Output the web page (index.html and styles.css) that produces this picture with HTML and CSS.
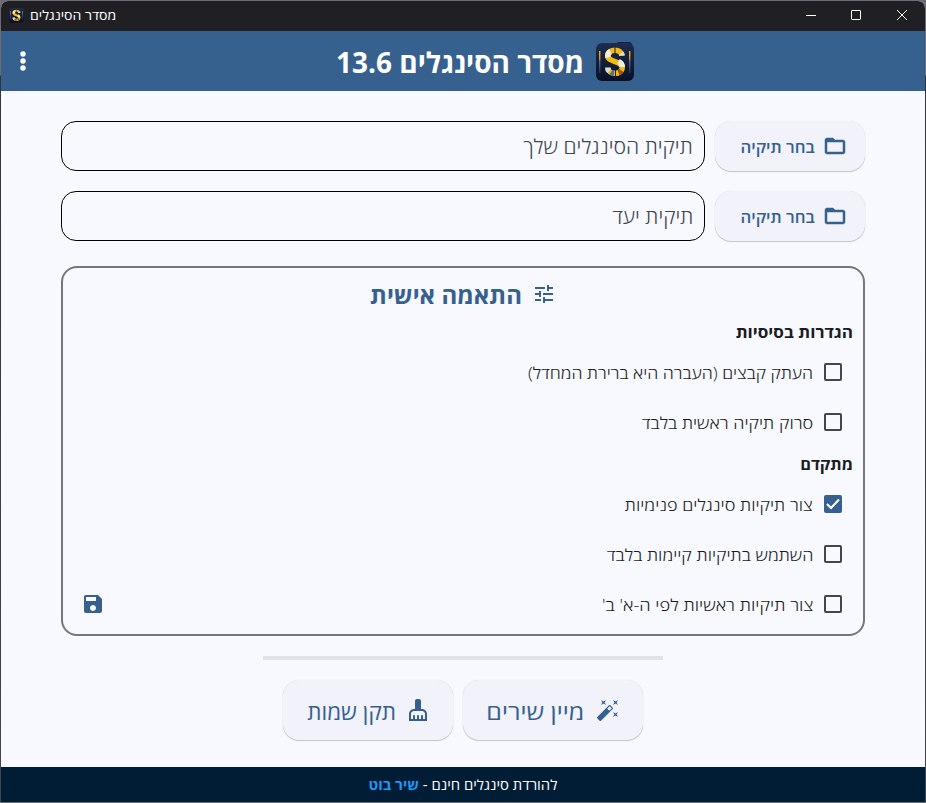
FILE: index.html
```html
<!DOCTYPE html>
<html lang="he" dir="rtl">
<head>
<meta charset="utf-8">
<title>מסדר הסינגלים</title>
<link rel="stylesheet" href="styles.css">
</head>
<body>
<svg width="0" height="0" class="defs" aria-hidden="true">
  <defs>
    <linearGradient id="tile" x1="0" y1="0" x2="0" y2="1"><stop offset="0" stop-color="#1d2d4f"/><stop offset="1" stop-color="#081024"/></linearGradient>
    <linearGradient id="bar" x1="0" y1="0" x2="0" y2="1"><stop offset="0" stop-color="#f5b014"/><stop offset=".35" stop-color="#d99a20"/><stop offset=".45" stop-color="#5a7190"/><stop offset="1" stop-color="#20375c"/></linearGradient>
    <symbol id="logo" viewBox="0 0 38 40">
      <path d="M20 3 22 1h12l2 2v4H20z" fill="#14203c"/>
      <rect y="2" width="38" height="38" rx="6" fill="url(#tile)"/>
      <rect x="3" y="10" width="1.400" height="22" fill="url(#bar)"/>
      <rect x="33" y="10" width="1.400" height="22" fill="url(#bar)"/>
      <g fill="none" stroke-width="5.500">
        <path d="M26 14.500C25.500 11 22.500 9.200 19 9.200c-4 0-7.200 2.300-7.200 5.600 0 7 14.400 4.500 14.400 11.700 0 3.500-3.200 5.800-7.200 5.800-4 0-7-2-7.200-5.500" stroke="#f6b817"/>
        <path d="M11.900 16.500c-.5-3 .8-5 2.600-6M22.500 20.500c2.500 1.200 3.800 3 3.700 5.500" stroke="#f4efdf"/>
        <path d="M25.200 12.200c.5.800.8 1.500.8 2.600M11.800 26.500c0 1.500.6 2.800 1.400 3.600" stroke="#d5dde0"/>
        <path d="M14.800 31.300c1 .6 2.200.9 3.200 1" stroke="#58718e"/>
        <path d="M22.500 31.600c1.200-.5 2-1.200 2.700-2.200" stroke="#9a5210"/>
      </g>
      <path d="M19 5.500v7M19.500 29v7" stroke="#14203c"/>
    </symbol>
    <symbol id="folder" viewBox="0 0 24 24"><path stroke-width=".5" stroke="#36618e" d="M20 6h-8l-2-2H4c-1.100 0-1.990.9-1.990 2L2 18c0 1.100.9 2 2 2h16c1.100 0 2-.9 2-2V8c0-1.100-.9-2-2-2zm0 12H4V8h16v10z"/></symbol>
  </defs>
</svg>
<div class="window">
  <div class="titlebar">
    <div class="controls">
      <svg width="12" height="12" viewBox="0 0 12 12"><path d="m1 1 10 10M11 1 1 11"/></svg>
      <svg width="12" height="12" viewBox="0 0 12 12"><rect x="1.500" y="1.500" width="9" height="9" rx=".5"/></svg>
      <svg width="12" height="12" viewBox="0 0 12 12"><path d="M1 6.500h10"/></svg>
    </div>
    <div class="caption"><span class="caption-text">מסדר הסינגלים</span><svg class="caption-logo"><use href="#logo"/></svg></div>
  </div>
  <header class="appbar">
    <h1><svg class="logo"><use href="#logo"/></svg><span class="app-title">מסדר הסינגלים 13.6</span></h1>
    <span class="more"><svg width="24" height="24" viewBox="0 0 24 24"><circle cx="12" cy="5" r="2.700"/><circle cx="12" cy="12" r="2.700"/><circle cx="12" cy="19" r="2.700"/></svg></span>
  </header>
  <main>
    <div class="row">
      <button class="btn pick"><svg><use href="#folder"/></svg><span>בחר תיקיה</span></button>
      <div class="field"><span>תיקית הסינגלים שלך</span></div>
    </div>
    <div class="row">
      <button class="btn pick"><svg><use href="#folder"/></svg><span>בחר תיקיה</span></button>
      <div class="field"><span>תיקית יעד</span></div>
    </div>
    <section class="panel">
      <h2><svg width="24" height="24" viewBox="0 0 24 24"><path d="M3 17v2h6v-2H3zM3 5v2h10V5H3zm10 16v-2h8v-2h-8v-2h-2v6h2zM7 9v2H3v2h4v2h2V9H7zm14 4v-2H11v2h10zm-6-4h2V7h4V5h-4V3h-2v6z"/></svg><span>התאמה אישית</span></h2>
      <h3 class="basic"><span>הגדרות בסיסיות</span></h3>
      <label class="check"><i></i><span class="c1">העתק קבצים (העברה היא ברירת המחדל)</span></label>
      <label class="check"><i></i><span>סרוק תיקיה ראשית בלבד</span></label>
      <h3 class="advanced"><span>מתקדם</span></h3>
      <label class="check"><i class="on"><svg width="18" height="18" viewBox="0 0 18 18"><path d="m3 9 4 4 8-8.500"/></svg></i><span>צור תיקיות סינגלים פנימיות</span></label>
      <label class="check"><i></i><span>השתמש בתיקיות קיימות בלבד</span></label>
      <div class="last">
        <label class="check"><i></i><span class="c5">צור תיקיות ראשיות לפי ה-א' ב'</span></label>
        <svg class="save" width="24" height="24" viewBox="0 0 24 24"><path d="M17 3H5c-1.110 0-2 .9-2 2v14c0 1.100.89 2 2 2h14c1.100 0 2-.9 2-2V7l-4-4zm-5 16c-1.660 0-3-1.340-3-3s1.340-3 3-3 3 1.340 3 3-1.340 3-3 3zm3-10H5V5h10v4z"/></svg>
      </div>
    </section>
    <div class="progress"></div>
    <div class="actions">
      <button class="btn sort"><svg viewBox="0 0 24 24"><path d="M7.500 5.600 10 7 8.600 4.500 10 2 7.500 3.400 5 2l1.400 2.500L5 7zm12 9.800L17 14l1.400 2.500L17 19l2.500-1.400L22 19l-1.400-2.500L22 14zM22 2l-2.500 1.400L17 2l1.400 2.500L17 7l2.500-1.400L22 7l-1.400-2.500zm-7.630 5.290a.996.996 0 0 0-1.410 0L1.290 18.960a.996.996 0 0 0 0 1.410l2.340 2.340c.39.39 1.020.39 1.410 0L16.700 11.050a.996.996 0 0 0 0-1.410l-2.330-2.350zm-1.030 5.490-2.120-2.120 2.440-2.440 2.120 2.120-2.440 2.440z"/></svg><span>מיין שירים</span></button>
      <button class="btn fix"><svg viewBox="0 0 24 24"><path d="M16 11h-1V3c0-1.100-.9-2-2-2h-2c-1.100 0-2 .9-2 2v8H8c-2.760 0-5 2.240-5 5v7h18v-7c0-2.760-2.240-5-5-5zm3 10h-2v-3c0-.55-.45-1-1-1s-1 .45-1 1v3h-2v-3c0-.55-.45-1-1-1s-1 .45-1 1v3H9v-3c0-.55-.45-1-1-1s-1 .45-1 1v3H5v-5c0-1.650 1.350-3 3-3h8c1.650 0 3 1.350 3 3v5z"/></svg><span>תקן שמות</span></button>
    </div>
  </main>
  <footer><span>להורדת סינגלים חינם - <a>שיר בוט</a></span></footer>
</div>
</body>
</html>
```
FILE: styles.css
```css
* { box-sizing: border-box; }
body { margin: 0; background: linear-gradient(#716b78, #716b78 75px, #30343d 76px, #40454e); font-family: "Open Sans", "Liberation Sans", sans-serif; overflow: hidden; }
.defs { position: absolute; }
svg { display: block; flex: none; }
span { display: block; white-space: nowrap; transform-origin: right center; }
.window { height: 801px; margin: 1px 1px 0; border-radius: 7px 7px 0 0; overflow: hidden; display: flex; flex-direction: column; background: #f8f9ff; }
.titlebar { height: 30px; background: #202024; display: flex; align-items: center; justify-content: space-between; padding: 0 17px 2px 8px; direction: ltr; flex-direction: row-reverse; }
.controls { display: flex; flex-direction: row-reverse; gap: 33px; fill: none; stroke: #fff; }
.controls svg { stroke-width: 1; }
.controls svg:first-child { margin-left: 1px; }
.caption { display: flex; flex-direction: row-reverse; align-items: center; gap: 6px; color: #fff; font-size: 13px; }
.caption-text { transform: scaleX(1.08); transform-origin: left center; direction: rtl; }
.caption-logo { width: 15px; height: 16px; }
.appbar { height: 60px; background: #36618e; color: #fff; display: flex; align-items: center; }
.appbar h1 { margin: 0; flex: 1; justify-content: center; display: flex; align-items: center; gap: 12px; font-size: 28px; font-weight: 700; }
.app-title { padding-top: 2px; }
.logo { width: 38px; height: 40px; }
.more { width: 44px; display: flex; justify-content: center; fill: #fff; }
main { flex: 1; padding: 30px 60px 0; display: flex; flex-direction: column; }
.row { display: flex; gap: 10px; margin-bottom: 20px; }
.btn { border: 0; background: #f1f2fa; color: #36618e; fill: #36618e; font: 600 16px "Open Sans", sans-serif; display: flex; align-items: center; justify-content: flex-start; border-radius: 16px; box-shadow: 0 1px 1px #0003, 0 0 1px #00000026; padding: 0; }
.btn span { padding-top: 2px; }
.pick { width: 150px; height: 50px; gap: 8px; padding-right: 18px; }
.pick span { transform: scaleX(1.05); }
.pick svg { width: 24px; height: 24px; }
.field { flex: 1; border: 1px solid #000; border-radius: 15px; display: flex; align-items: center; padding: 0 11px; font-size: 20px; font-weight: 300; color: #42474e; }
.field span { transform: scaleX(1.06); }
.panel { height: 370px; border: 2px solid #73777f; border-radius: 16px; margin-top: 5px; display: flex; flex-direction: column; }
h2 { margin: 8px 0 0; height: 36px; display: flex; align-items: center; justify-content: center; gap: 10px; color: #36618e; fill: #36618e; font-size: 24px; }
h3 { margin: 0 10px; font-size: 16px; height: 32px; line-height: 32px; color: #191c20; }
.basic { margin-top: 4px; }
.basic span { transform: scaleX(1.069); }
.advanced span { transform: scaleX(1.02); }
h3 + .check { margin-top: -1px; }
.advanced { margin-top: 1px; }
.check { height: 50px; display: flex; align-items: center; gap: 11px; padding-right: 21px; font-size: 16px; font-weight: 300; color: #191c20; }
.check span { padding-top: 2px; transform: scaleX(1.127); }
.check .c1 { transform: scaleX(1.109); }
.check .c5 { transform: scaleX(1.14); }
.check i { width: 18px; height: 18px; border: 2px solid #42474e; border-radius: 2px; }
.check i.on { border: 0; background: #36618e; }
.check i path { fill: none; stroke: #fff; stroke-width: 2; }
.last { display: flex; align-items: center; justify-content: space-between; padding-left: 18px; }
.save { fill: #36618e; }
.progress { width: 400px; height: 4px; margin: 20px auto; background: #e1e2e8; flex: none; }
.actions { display: flex; justify-content: center; gap: 10px; }
.actions .btn { height: 60px; font-size: 22px; font-weight: 500; gap: 12px; }
.actions svg { width: 24px; height: 24px; }
.actions .sort { width: 180px; padding-right: 23px; }
.sort span { transform: scaleX(1.135); }
.actions .fix { width: 170px; padding-right: 23px; gap: 10px; }
.fix span { transform: scaleX(1.02); }
footer { height: 35px; background: #001d36; color: #fff; display: flex; align-items: center; justify-content: center; font-size: 14px; }
footer span { transform: scaleX(1.062); transform-origin: center; }
footer a { color: #2196f3; font-weight: 700; }
```
